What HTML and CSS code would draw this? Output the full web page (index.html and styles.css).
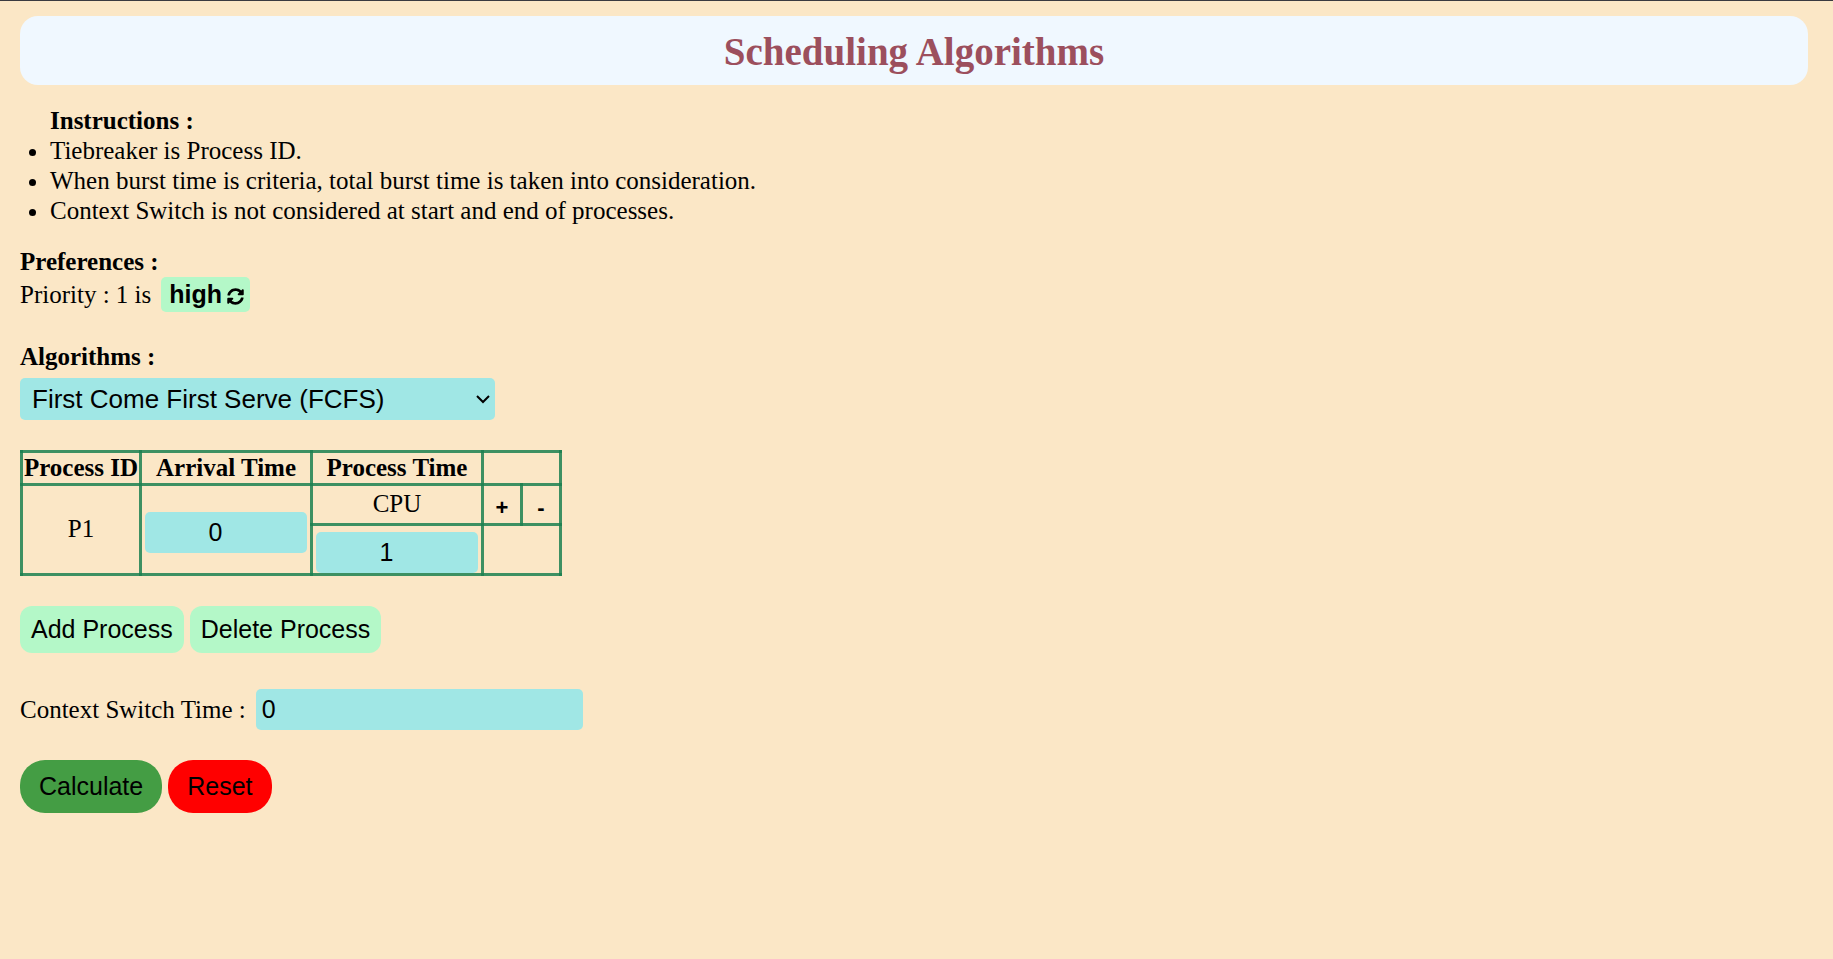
FILE: index.html
```html
<!DOCTYPE html>
<html lang="en">
<head>
<meta charset="utf-8">
<title>Scheduling Algorithms</title>
<link rel="stylesheet" href="styles.css">
</head>
<body>
<h1 class="title">Scheduling Algorithms</h1>
<main>
  <section class="instructions">
    <h2 class="heading">Instructions :</h2>
    <ul class="list">
      <li>Tiebreaker is Process ID.</li>
      <li>When burst time is criteria, total burst time is taken into consideration.</li>
      <li>Context Switch is not considered at start and end of processes.</li>
    </ul>
  </section>
  <section class="preferences">
    <h2 class="heading">Preferences :</h2>
    <div class="row labelled">
      <span>Priority : 1 is</span>
      <button type="button" class="toggle">high
        <svg class="sync" viewBox="0 0 512 512" aria-hidden="true">
          <path d="M370.7 133.3C339.5 104 298.9 88 255.8 88c-77.500.1-144.300 53.200-162.800 126.900-1.300 5.400-6.100 9.200-11.700 9.200H24.100c-7.500 0-13.200-6.800-11.800-14.200C33.900 94.900 134.800 8 256 8c66.400 0 126.800 26.100 171.300 68.700L463 41C478.100 25.900 504 36.600 504 57.900V192c0 13.300-10.700 24-24 24H345.900c-21.400 0-32.100-25.900-17-41zM32 296h134.100c21.400 0 32.100 25.900 17 41l-41.800 41.800c31.300 29.300 71.800 45.300 114.900 45.300 77.400-.1 144.300-53.100 162.800-126.900 1.300-5.400 6.100-9.200 11.700-9.200h57.300c7.500 0 13.200 6.800 11.800 14.200C478.100 417.100 377.200 504 256 504c-66.400 0-126.800-26.100-171.300-68.700L49 471c-15.100 15.100-41 4.400-41-16.900V320c0-13.300 10.700-24 24-24z"/>
        </svg>
      </button>
    </div>
  </section>
  <section class="algorithms">
    <label class="heading" for="algo">Algorithms :</label>
    <div class="select-wrap">
      <select id="algo" class="field select">
        <option>First Come First Serve (FCFS)</option>
      </select>
      <svg class="chevron" viewBox="0 0 14 9" aria-hidden="true"><path d="M1 1l6 6 6-6"/></svg>
    </div>
  </section>
  <table class="processes">
    <colgroup><col class="col-id"><col class="col-time"><col class="col-time"><col class="col-button"><col class="col-button"></colgroup>
    <tr class="head"><th>Process ID</th><th>Arrival Time</th><th>Process Time</th><th colspan="2"></th></tr>
    <tr class="types">
      <td rowspan="2" class="process-id">P1</td>
      <td rowspan="2" class="arrival"><input class="field number" type="number" value="0" aria-label="Arrival time"></td>
      <td class="cpu">CPU</td>
      <td><button type="button" class="step" aria-label="Add burst">+</button></td>
      <td><button type="button" class="step" aria-label="Remove burst">-</button></td>
    </tr>
    <tr class="times">
      <td class="burst"><input class="field number" type="number" value="1" aria-label="CPU time"></td>
      <td colspan="2"></td>
    </tr>
  </table>
  <div class="row actions">
    <button type="button" class="edit">Add Process</button>
    <button type="button" class="edit">Delete Process</button>
  </div>
  <div class="row labelled context">
    <label for="context">Context Switch Time :</label>
    <input id="context" class="field context-input" type="number" value="0">
  </div>
  <div class="row">
    <button type="button" class="pill calculate">Calculate</button>
    <button type="button" class="pill reset">Reset</button>
  </div>
</main>
</body>
</html>
```
FILE: styles.css
```css
* {
  box-sizing: border-box;
}

html {
  background: #fbe7c6;
}

body {
  margin: 0;
  padding: 15px 25px 20px 20px;
  border-top: 1px solid #3a3a40;
  color: #000;
  font: 25px/30px "Liberation Serif", "Times New Roman", serif;
}

button,
input,
select {
  margin: 0;
  border: 0;
  color: #000;
  font: 25px/29px "Liberation Sans", Arial, sans-serif;
}

.title {
  margin: 0;
  padding: 13px 0 11px;
  border-radius: 18px;
  background: #f0f8ff;
  color: #9c4f5d;
  font-size: 39px;
  line-height: 45px;
  text-align: center;
}

.heading {
  display: block;
  margin: 0;
  font-size: 25px;
  font-weight: bold;
  line-height: 30px;
}

.instructions {
  margin-top: 21px;
  padding-left: 30px;
}

.list {
  margin: 0;
  padding: 0;
}

.row {
  display: flex;
  align-items: center;
  gap: 6px;
}

.labelled {
  gap: 10px;
}

.preferences {
  margin-top: 21px;
}

.toggle {
  display: flex;
  align-items: center;
  gap: 5px;
  padding: 3px 6px 3px 8px;
  border-radius: 5px;
  background: #b4f8c8;
  font-weight: bold;
}

.sync {
  width: 17px;
  height: 17px;
  margin-top: 4px;
}

.algorithms {
  margin-top: 30px;
}

.field {
  border-radius: 5px;
  background: #a0e7e5;
}

.select-wrap {
  position: relative;
  width: 475px;
  max-width: 100%;
  margin-top: 6px;
}

.select {
  display: block;
  width: 100%;
  height: 42px;
  padding: 0 30px 0 12px;
  font-size: 26px;
  appearance: none;
}

.chevron {
  position: absolute;
  top: 17px;
  right: 5px;
  width: 14px;
  height: 9px;
  fill: none;
  stroke: #000;
  stroke-width: 2;
  pointer-events: none;
}

.processes {
  width: 542px;
  margin-top: 30px;
  border-collapse: collapse;
  table-layout: fixed;
  text-align: center;
}

.processes th,
.processes td {
  padding: 0;
  border: 3px solid rgba(27, 128, 80, 0.85);
  white-space: nowrap;
}

.col-id {
  width: 119px;
}

.col-time {
  width: 171px;
}

.col-button {
  width: 39px;
}

.head {
  height: 33px;
}

.types {
  height: 40px;
}

.times {
  height: 50px;
}

.processes .process-id {
  padding-bottom: 2px;
}

.processes .cpu {
  padding-bottom: 2px;
}

.processes .arrival {
  padding-top: 6px;
}

.processes .burst {
  padding-top: 6px;
}

.number {
  display: block;
  width: 162px;
  height: 41px;
  margin: 0 auto;
  padding: 0 24px 0 2px;
  text-align: center;
}

.number[type="number"] {
  padding-right: 24px;
  padding-left: 18px;
}

.field[type="number"] {
  appearance: textfield;
}

.step {
  display: block;
  width: 100%;
  padding: 6px 0 0;
  background: none;
  font-size: 22px;
  font-weight: bold;
}

.actions {
  margin-top: 30px;
}

.edit {
  padding: 9px 11px;
  border-radius: 12px;
  background: #b4f8c8;
}

.context {
  margin: 36px 0 30px;
}

.context-input {
  width: 327px;
  height: 41px;
  padding: 0 6px;
}

.pill {
  padding: 12px 19px;
  border-radius: 25px;
}

.calculate {
  background: #449d44;
}

.reset {
  background: #f00;
}
```
